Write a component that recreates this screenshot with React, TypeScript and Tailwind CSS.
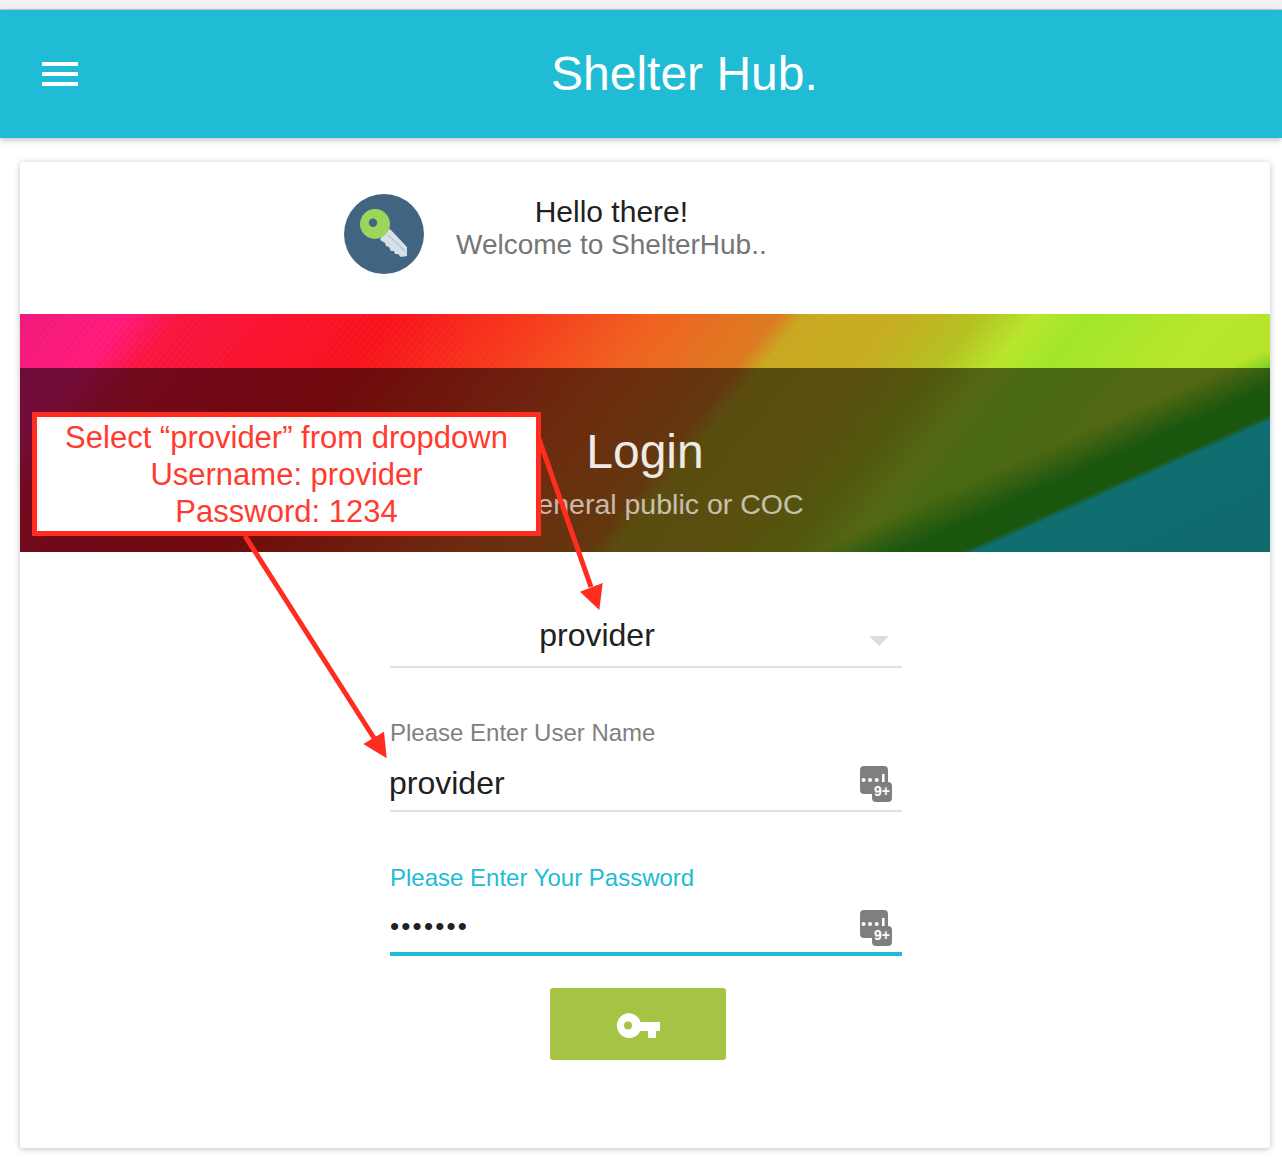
const font = "font-['Liberation_Sans',Arial,sans-serif]";

function PasswordIcon() {
  return (
    <svg width="34" height="38" viewBox="0 0 34 38" className="shrink-0">
      <rect x="1" y="1" width="28" height="28" rx="4" fill="#7f7f7f" />
      <rect x="13" y="17" width="20" height="20" rx="4" fill="#7f7f7f" />
      <circle cx="4.5" cy="15" r="2" fill="#fff" />
      <circle cx="11" cy="15" r="2" fill="#fff" />
      <circle cx="17.7" cy="15" r="2" fill="#fff" />
      <rect x="23" y="9" width="2.6" height="8" fill="#fff" />
      <text x="23" y="31" textAnchor="middle" fontSize="14" fontWeight="700" fill="#fff" fontFamily="Liberation Sans">
        9+
      </text>
    </svg>
  );
}

function KeyBadge() {
  return (
    <svg width="80" height="80" viewBox="0 0 80 80" className="shrink-0">
      <circle cx="40" cy="40" r="40" fill="#406482" />
      <path d="M40 37 L46 35 L63 53 L63 62 L57 63 L54 60 L51 60 L50 57 L47 57 L45 53 L42 52 L41 49 L36 46 Z" fill="#d6e0ea" />
      <path d="M44 41 L61 57" stroke="#9fb0c0" strokeWidth="1" />
      <circle cx="31" cy="30" r="15" fill="#9bd65a" />
      <circle cx="29" cy="28.7" r="4.2" fill="#406482" />
    </svg>
  );
}

function SubmitKey() {
  return (
    <svg width="44" height="28" viewBox="0 0 44 28">
      <path
        fillRule="evenodd"
        fill="#fff"
        d="M12.500 3a12.500 12.500 0 0 1 12 9H44v9h-4v7h-8v-7h-7.500A12.500 12.500 0 1 1 12.500 3ZM12 11.500a4 4 0 1 0 0 8 4 4 0 0 0 0-8Z"
      />
    </svg>
  );
}

function Field(props: { label: string; labelClass: string; rowClass: string; children: React.ReactNode }) {
  return (
    <div className="w-[512px]">
      <div className={`text-[24px] leading-[28px] ${props.labelClass}`}>{props.label}</div>
      <div className={`flex items-center justify-between pr-[9px] ${props.rowClass}`}>{props.children}</div>
    </div>
  );
}

export default function App() {
  return (
    <div className={`relative w-[1282px] h-[1170px] overflow-hidden bg-white ${font}`}>
      <div className="h-[10px] bg-[#f2f2f2] border-b border-[#c8c8c8]" />
      <header className="relative z-10 flex items-center h-[128px] bg-[#20bcd5] shadow-[0_2px_6px_rgba(0,0,0,0.25)]">
        <div className="flex flex-col gap-[6px] ml-[42px]">
          <span className="block w-[36px] h-[4px] bg-white" />
          <span className="block w-[36px] h-[4px] bg-white" />
          <span className="block w-[36px] h-[4px] bg-white" />
        </div>
        <h1 className="ml-[473px] text-[48px] text-white leading-none">Shelter Hub.</h1>
      </header>

      <main className="ml-[20px] mt-[24px] w-[1250px] h-[986px] bg-white rounded-[4px] overflow-hidden shadow-[0_1px_6px_rgba(0,0,0,0.25)]">
        <div className="flex items-start h-[152px] pt-[32px] pl-[324px]">
          <KeyBadge />
          <div className="ml-[32px] mt-[1px] text-center">
            <div className="text-[30px] leading-[34px] text-[#212121]">Hello there!</div>
            <div className="text-[28px] leading-[32px] text-[#757575]">Welcome to ShelterHub..</div>
          </div>
        </div>

        <div className="h-[238px] pt-[54px] bg-[repeating-linear-gradient(129deg,rgba(255,255,255,0.025)_0,rgba(255,255,255,0.025)_2px,transparent_2px,transparent_5px),linear-gradient(156deg,transparent_0,transparent_540px,#3ac020_575px,#3ac020_600px,#21f4f9_606px,#21e8f0_100%),linear-gradient(129deg,#f0187c_0,#ff1a7a_85px,#fa1440_125px,#f8121c_290px,#f63a1c_400px,#f0621f_500px,#dc7a20_590px,#c8a820_610px,#c8ac20_680px,#b4c020_745px,#b8e62a_790px,#a0e628_830px,#b8e62a_930px,#b0e020_100%)]">
          <div className="flex flex-col items-center h-[184px] pt-[54px] bg-black/55">
            <div className="text-[48px] leading-[60px] text-[#eeeae6]">Login</div>
            <div className="mt-[5px] mr-[22px] text-[28.5px] leading-[34px] text-white/65">For General public or COC</div>
          </div>
        </div>

        <div className="flex flex-col items-center pt-[58px] pl-[2px]">
          <div className="relative flex items-center justify-center w-[512px] h-[58px] pb-[7px] border-b-2 border-[#e0e0e0] text-[32px] text-[#212121]">
            <span className="mr-[98px]">provider</span>
            <span className="absolute right-[13px] top-[26px] w-0 h-0 border-x-[10px] border-x-transparent border-t-[10px] border-t-[#dcdcdc]" />
          </div>

          <div className="mt-[51px]">
            <Field label="Please Enter User Name" labelClass="text-[#808080]" rowClass="h-[65px] pt-[11px] border-b-2 border-[#e0e0e0]">
              <span className="mb-[2px] -ml-[1px] text-[32px] text-[#212121]">provider</span>
              <PasswordIcon />
            </Field>
          </div>

          <div className="mt-[52px]">
            <Field label="Please Enter Your Password" labelClass="text-[#20bcd5]" rowClass="h-[64px] pt-[12px] border-b-[4px] border-[#20bcd5]">
              <span className="mb-[4px] text-[26px] tracking-[2.2px] leading-none text-[#212121]">•••••••</span>
              <PasswordIcon />
            </Field>
          </div>

          <button className="flex items-center justify-center mt-[32px] -ml-[16px] w-[176px] h-[72px] rounded-[3px] bg-[#a6c444]">
            <SubmitKey />
          </button>
        </div>
      </main>

      {/* annotation drawn over the page */}
      <div className="absolute left-[32px] top-[412px] w-[509px] h-[124px] pt-[2px] border-[5px] border-[#ff2d20] bg-white text-center text-[31px] leading-[37px] text-[#ff3b30]">
        <div>Select “provider” from dropdown</div>
        <div>Username: provider</div>
        <div>Password: 1234</div>
      </div>
      <svg className="absolute left-0 top-0 pointer-events-none" width="1282" height="1170">
        <path d="M538 436 L591 587" stroke="#ff2d20" strokeWidth="5" />
        <path d="M580 591.700 L602.700 583 L599.300 610 Z" fill="#ff2d20" />
        <path d="M245 536 L374 738" stroke="#ff2d20" strokeWidth="5" />
        <path d="M363.300 744 L384 731.700 L386.700 758.300 Z" fill="#ff2d20" />
      </svg>
    </div>
  );
}
